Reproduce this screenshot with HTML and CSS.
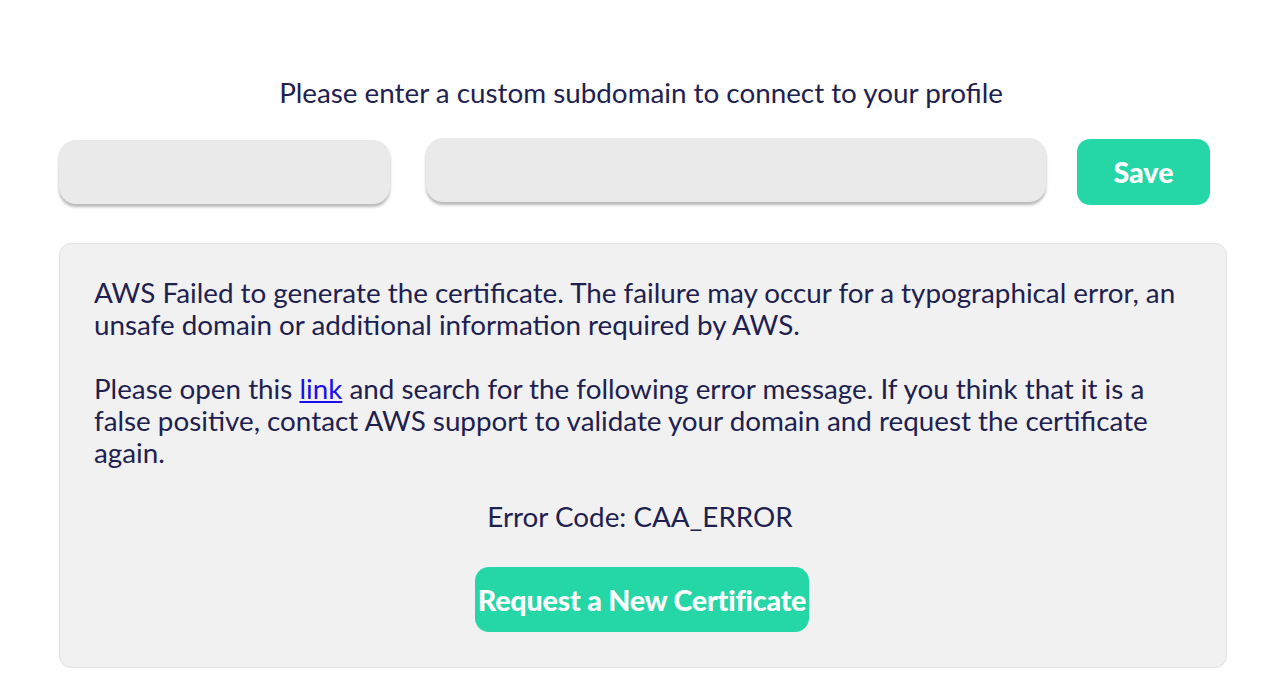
FILE: index.html
```html
<!DOCTYPE html>
<html lang="en">
<head>
  <meta charset="UTF-8" />
  <meta name="viewport" content="width=device-width, initial-scale=1.0"/>
  <title>Custom subdomain</title>
  <link rel="stylesheet" href="styles.css">
</head>
<body>
  <div class="container">
    <h2>Please enter a custom subdomain to connect to your profile</h2>

    <div class="domain-row">
      <input type="text" class="field field-sub" />
      <input type="text" class="field field-domain" />
      <button class="btn btn-save">Save</button>
    </div>

    <div class="notice">
      <p>AWS Failed to generate the certificate. The failure may occur for a typographical error, an unsafe domain or additional information required by AWS.</p>
      <p>Please open this <a href="#">link</a> and search for the following error message. If you think that it is a false positive, contact AWS support to validate your domain and request the certificate again.</p>
      <p class="code">Error Code: CAA_ERROR</p>
      <div class="actions">
        <button class="btn btn-request">Request a New Certificate</button>
      </div>
    </div>
  </div>
</body>
</html>
```

FILE: styles.css
```css
body {
  margin: 0;
  font-family: Lato, "Open Sans", sans-serif;
  background-color: #ffffff;
  color: #1e2150;
}

.container {
  width: 1168px;
  margin: 0 0 0 59px;
  padding-top: 76px;
}

h2 {
  margin: 0;
  text-align: center;
  font-size: 27.8px;
  font-weight: 400;
  line-height: 34px;
  padding-right: 4px;
}

.domain-row {
  display: flex;
  align-items: center;
  margin-top: 27px;
  width: 1151px;
}

.field {
  height: 64px;
  border: none;
  border-radius: 17px;
  background-color: #eaeaea;
  box-shadow: 0 3px 3px rgba(0, 0, 0, 0.28);
  outline: none;
  padding: 0 16px;
  box-sizing: border-box;
  font-size: 20px;
}

.field-sub {
  width: 331px;
  margin-top: 2px;
}

.field-domain {
  width: 620px;
  margin-left: 36px;
  margin-top: -3px;
}

.btn {
  border: none;
  background-color: #25d6a6;
  color: #ffffff;
  font-family: Lato, sans-serif;
  font-weight: 900;
  font-size: 28.6px;
  cursor: pointer;
}

.btn-save {
  width: 133px;
  height: 66px;
  margin-left: 31px;
  margin-top: 2px;
  border-radius: 13px;
}

.notice {
  margin-top: 38px;
  background-color: #f1f1f1;
  border: 1px solid #e2e2e2;
  border-radius: 12px;
  padding: 33px 40px 35px 34px;
  font-size: 27.8px;
  line-height: 32px;
}

.notice p {
  margin: 0 0 32px;
}

.notice a {
  color: #1a0dee;
}

.notice .code {
  text-align: center;
  margin-bottom: 34px;
}

.actions {
  display: flex;
  justify-content: center;
  padding-left: 4px;
}

.btn-request {
  width: 334px;
  height: 65px;
  border-radius: 14px;
  padding: 0;
  white-space: nowrap;
  letter-spacing: -0.2px;
}
```
